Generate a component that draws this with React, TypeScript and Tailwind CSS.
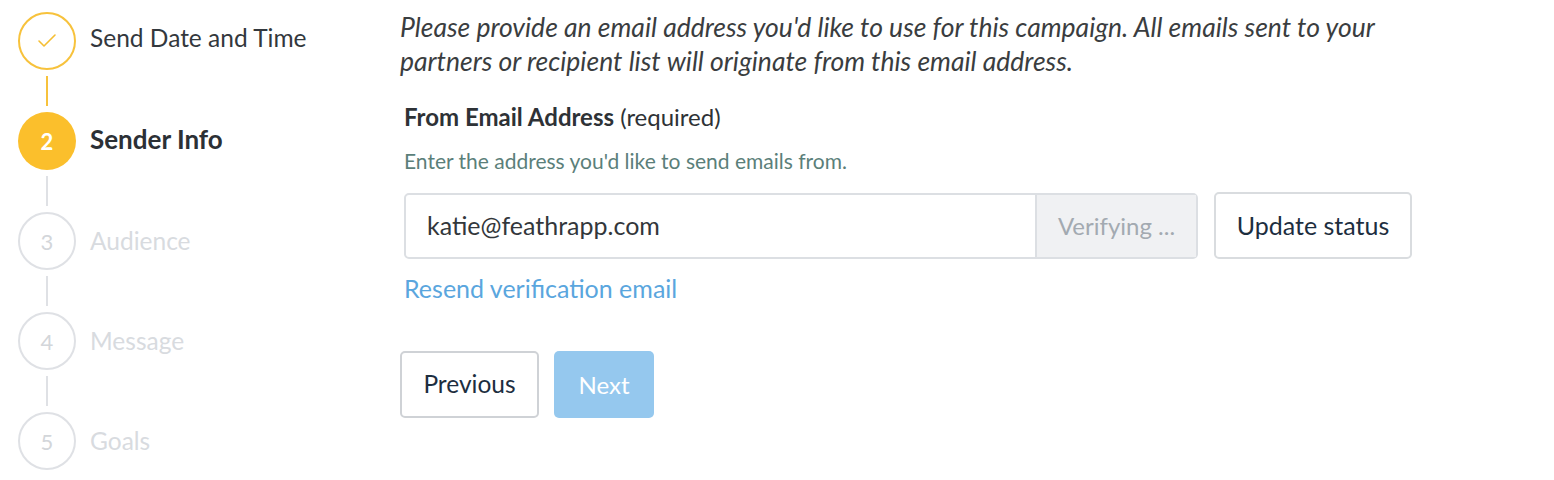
import { Check } from "lucide-react";

type Step = { label: string; state: "done" | "active" | "todo" };

const steps: Step[] = [
  { label: "Send Date and Time", state: "done" },
  { label: "Sender Info", state: "active" },
  { label: "Audience", state: "todo" },
  { label: "Message", state: "todo" },
  { label: "Goals", state: "todo" },
];

function StepCircle({ step, n }: { step: Step; n: number }) {
  if (step.state === "done")
    return (
      <div className="flex h-[58px] w-[58px] shrink-0 items-center justify-center rounded-full border-2 border-[#f7c23c] text-[#f5be33]">
        <Check size={24} strokeWidth={1.6} />
      </div>
    );
  if (step.state === "active")
    return (
      <div className="flex h-[58px] w-[58px] shrink-0 items-center justify-center rounded-full bg-[#fbbf2c] text-[22px] font-bold text-white">
        {n}
      </div>
    );
  return (
    <div className="flex h-[58px] w-[58px] shrink-0 items-center justify-center rounded-full border-2 border-[#dfe1e5] text-[22px] text-[#d3d6da]">
      {n}
    </div>
  );
}

function Stepper() {
  return (
    <div className="flex w-[400px] shrink-0 flex-col pl-[18px] pt-[12px]">
      {steps.map((s, i) => (
        <div key={s.label} className="flex flex-col">
          {i > 0 && (
            <div
              className={
                "my-[6px] ml-[28px] h-[30px] w-[2px] " +
                (i <= 1 ? "bg-[#f7c23c]" : "bg-[#dfe1e5]")
              }
            />
          )}
          <div className="flex items-center gap-[14px]">
            <StepCircle step={s} n={i + 1} />
            <span
              className={
                s.state === "done"
                  ? "-mt-[6px] text-[24.5px] text-[#33383d]"
                  : s.state === "active"
                  ? "-mt-[4px] text-[26px] font-bold text-[#2c3035]"
                  : "text-[24.5px] text-[#d8dbdf]"
              }
            >
              {s.label}
            </span>
          </div>
        </div>
      ))}
    </div>
  );
}

export default function App() {
  return (
    <div className="flex h-[480px] w-[1554px] bg-white font-['Lato','Liberation_Sans',sans-serif]">
      <Stepper />
      <main className="flex flex-col pt-[10px]">
        <p className="w-[1000px] text-[26.5px] italic leading-[34px] text-[#3a3d40]">
          Please provide an email address you'd like to use for this campaign. All emails sent to your
          partners or recipient list will originate from this email address.
        </p>
        <div className="mt-[24px] pl-[4px] text-[24px] leading-[30px] text-[#2e3236]">
          <span className="font-bold">From Email Address</span> (required)
        </div>
        <div className="mt-[15px] pl-[4px] text-[21px] leading-[28px] text-[#5b7f7a]">
          Enter the address you'd like to send emails from.
        </div>
        <div className="mt-[17px] flex items-center pl-[4px]">
          <div className="flex h-[66px] w-[794px] rounded-[5px] border-2 border-[#dcdfe3]">
            <div className="flex flex-1 items-center px-[21px] text-[25px] text-[#33373b]">
              katie@feathrapp.com
            </div>
            <div className="flex w-[161px] items-center justify-center border-l-2 border-[#dcdfe3] bg-[#f0f1f3] text-[24px] text-[#a3aab1]">
              Verifying ...
            </div>
          </div>
          <button className="ml-[16px] h-[67px] w-[198px] rounded-[5px] border-2 border-[#d9dcdf] bg-white text-[25px] text-[#1d2e3f]">
            Update status
          </button>
        </div>
        <a className="mt-[12px] pl-[4px] text-[25px] leading-[34px] text-[#5aa6de]">Resend verification email</a>
        <div className="mt-[46px] flex gap-[15px]">
          <button className="h-[67px] w-[139px] rounded-[5px] border-2 border-[#cfd2d6] bg-white text-[24.5px] text-[#1d2e3f]">
            Previous
          </button>
          <button className="h-[67px] w-[100px] rounded-[5px] bg-[#95c8ee] text-[24px] text-white">
            Next
          </button>
        </div>
      </main>
    </div>
  );
}
